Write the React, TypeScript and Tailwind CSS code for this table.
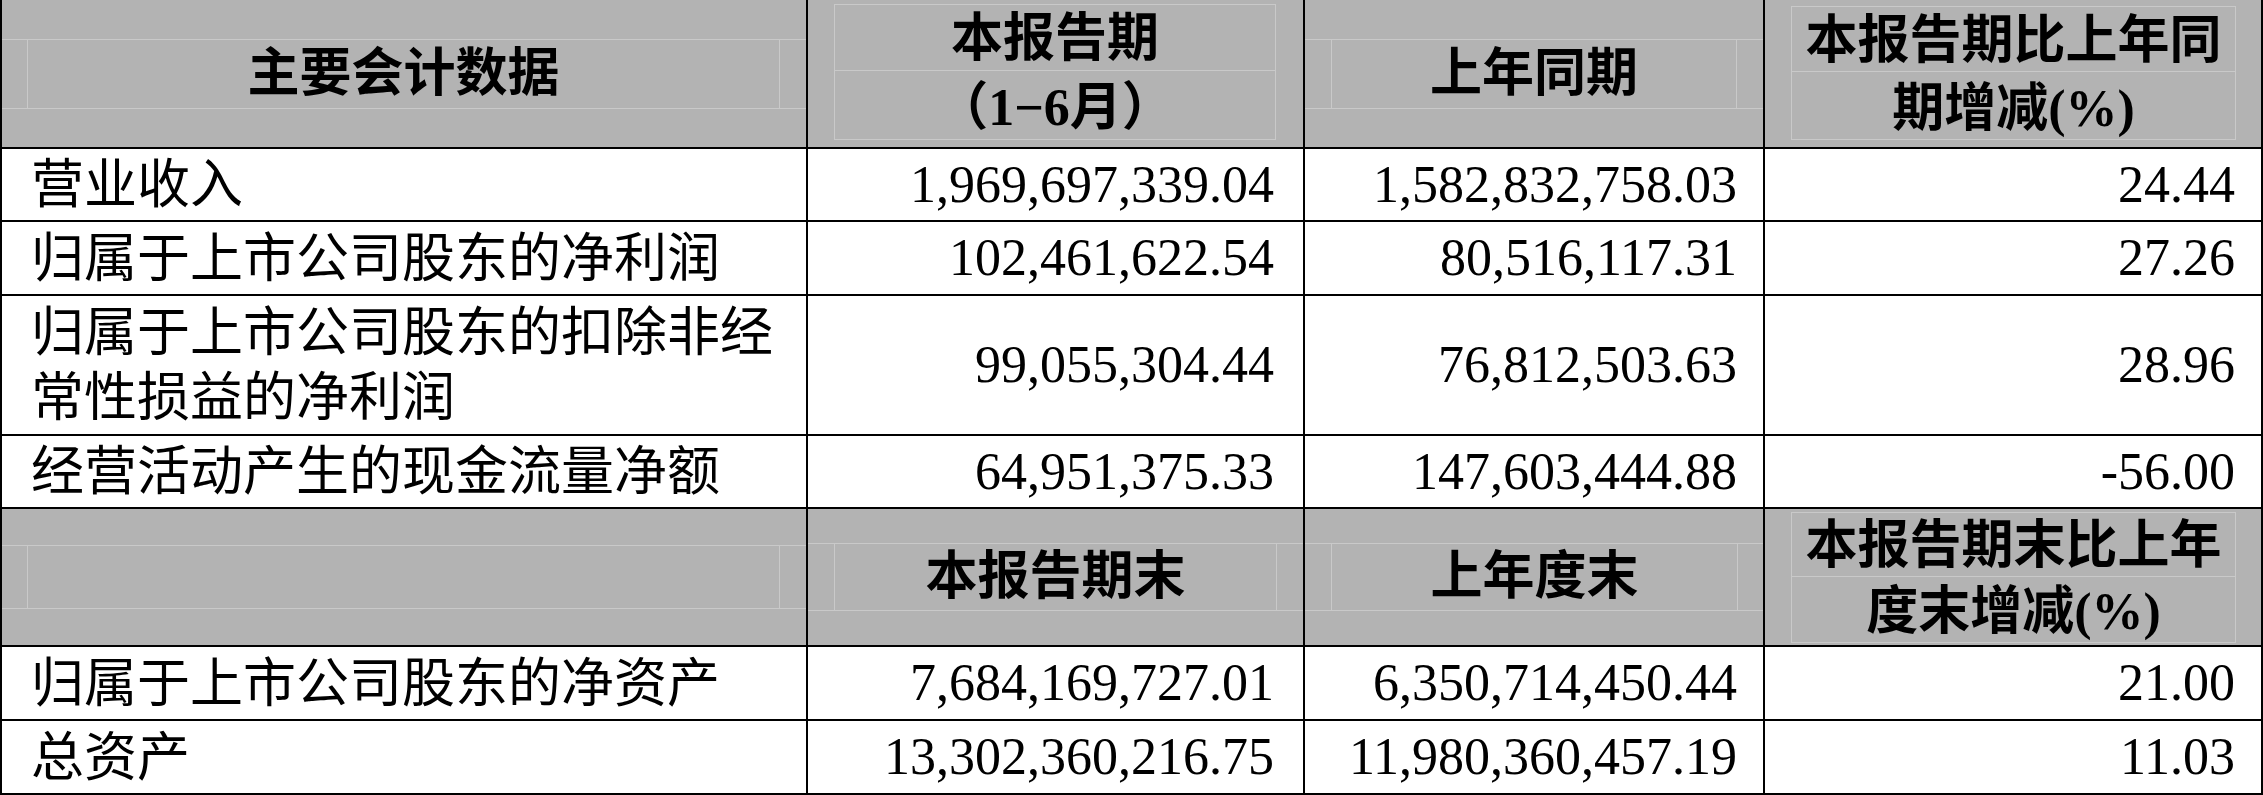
const rows1 = [
  { label: '营业收入', cur: '1,969,697,339.04', prev: '1,582,832,758.03', pct: '24.44', h: 'h-[73px]' },
  { label: '归属于上市公司股东的净利润', cur: '102,461,622.54', prev: '80,516,117.31', pct: '27.26', h: 'h-[74px]' },
  {
    label: ['归属于上市公司股东的扣除非经', '常性损益的净利润'],
    cur: '99,055,304.44',
    prev: '76,812,503.63',
    pct: '28.96',
    h: 'h-[140px]',
  },
  { label: '经营活动产生的现金流量净额', cur: '64,951,375.33', prev: '147,603,444.88', pct: '-56.00', h: 'h-[73px]' },
];

const rows2 = [
  { label: '归属于上市公司股东的净资产', cur: '7,684,169,727.01', prev: '6,350,714,450.44', pct: '21.00', h: 'h-[74px]' },
  { label: '总资产', cur: '13,302,360,216.75', prev: '11,980,360,457.19', pct: '11.03', h: 'h-[74px]' },
];

const grid = 'grid grid-cols-[806px_497px_460px_498px] border-b-2 border-black';
const cell = 'border-r-2 border-black';
const faint = 'border-[#c9c9c9]';

function Pct() {
  return <span className="font-['Liberation_Serif',serif]">(%)</span>;
}

// single-line header cell, text sits in a faint frame box
function FrameCell({ text, ml, mr, boxH }: { text: string; ml: string; mr: string; boxH: string }) {
  return (
    <div className={`${cell} flex items-center`}>
      <div className={`w-full ${boxH} border-y ${faint} flex`}>
        <div className={`flex-1 ${ml} ${mr} border-x ${faint} flex items-center justify-center`}>{text}</div>
      </div>
    </div>
  );
}

// two-line header cell, each line in its own half of the frame
function SplitCell({ top, bottom, pad }: { top: React.ReactNode; bottom: React.ReactNode; pad: string }) {
  return (
    <div className={`${cell} flex ${pad}`}>
      <div className={`flex-1 border ${faint} flex flex-col`}>
        <div className={`flex-1 border-b ${faint} flex items-center justify-center pt-[3px]`}>{top}</div>
        <div className="flex-1 flex items-center justify-center pt-[6px]">{bottom}</div>
      </div>
    </div>
  );
}

function DataRow({ r }: { r: { label: string | string[]; cur: string; prev: string; pct: string; h: string } }) {
  return (
    <div className={`${grid} ${r.h}`}>
      <div className={`${cell} flex items-center pl-[29px] text-[53px] leading-[65px] pt-[2px]`}>
        {Array.isArray(r.label) ? (
          <div>
            {r.label[0]}
            <br />
            {r.label[1]}
          </div>
        ) : (
          r.label
        )}
      </div>
      <div className={`${cell} flex items-center justify-end pr-[29px]`}>{r.cur}</div>
      <div className={`${cell} flex items-center justify-end pr-[26px]`}>{r.prev}</div>
      <div className={`${cell} flex items-center justify-end pr-[26px]`}>{r.pct}</div>
    </div>
  );
}

export default function App() {
  return (
    <div className="w-[2263px] h-[795px] bg-white overflow-hidden">
      <div className="border-l-2 border-black text-black text-[52px] leading-none font-['Liberation_Serif','Noto_Sans_CJK_SC',sans-serif]">
        <div className={`${grid} h-[149px] bg-[#b3b3b3] font-bold`}>
          <FrameCell text="主要会计数据" ml="ml-[25px]" mr="mr-[26px]" boxH="h-[70px]" />
          <SplitCell
            pad="pl-[26px] pr-[27px] pt-[4px] pb-[7px]"
            top="本报告期"
            bottom={<span>（1−6月）</span>}
          />
          <FrameCell text="上年同期" ml="ml-[26px]" mr="mr-[26px]" boxH="h-[70px]" />
          <SplitCell
            pad="pl-[26px] pr-[25px] pt-[6px] pb-[7px]"
            top="本报告期比上年同"
            bottom={
              <span>
                期增减
                <Pct />
              </span>
            }
          />
        </div>

        {rows1.map((r, i) => (
          <DataRow key={i} r={r} />
        ))}

        <div className={`${grid} h-[138px] bg-[#b3b3b3] font-bold`}>
          <FrameCell text="" ml="ml-[25px]" mr="mr-[26px]" boxH="h-[64px]" />
          <FrameCell text="本报告期末" ml="ml-[26px]" mr="mr-[26px]" boxH="h-[68px]" />
          <FrameCell text="上年度末" ml="ml-[26px]" mr="mr-[25px]" boxH="h-[68px]" />
          <SplitCell
            pad="pl-[26px] pr-[25px] pt-[3px] pb-[2px]"
            top="本报告期末比上年"
            bottom={
              <span>
                度末增减
                <Pct />
              </span>
            }
          />
        </div>

        {rows2.map((r, i) => (
          <DataRow key={i} r={r} />
        ))}
      </div>
    </div>
  );
}
